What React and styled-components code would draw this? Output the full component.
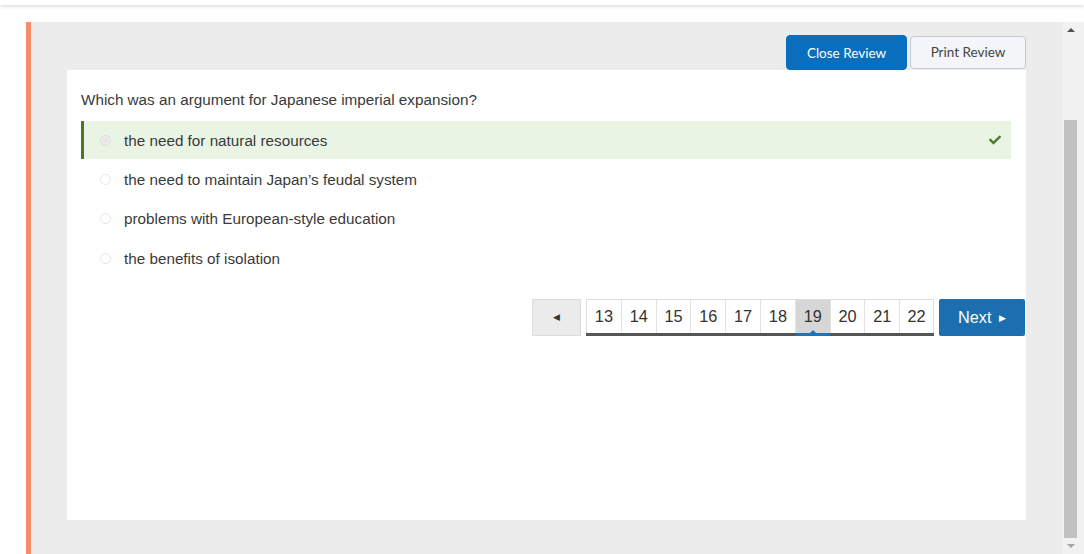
import React from "react";
import styled, { createGlobalStyle } from "styled-components";
import { FaCheck } from "react-icons/fa";

const GlobalStyle = createGlobalStyle`
  *, *::before, *::after {
    box-sizing: border-box;
  }
  html, body {
    margin: 0;
    padding: 0;
    background: #ffffff;
    font-family: "Liberation Sans", Arial, sans-serif;
    overflow: hidden;
  }
`;

const options = [
  { text: "the need for natural resources", correct: true },
  { text: "the need to maintain Japan\u2019s feudal system" },
  { text: "problems with European-style education" },
  { text: "the benefits of isolation" },
];

const pages = [13, 14, 15, 16, 17, 18, 19, 20, 21, 22];

const App = () => {
  return (
    <>
      <GlobalStyle />
      <TopBar />
      <Frame>
        <Panel>
          <Toolbar>
            <PrimaryButton>Close Review</PrimaryButton>
            <SecondaryButton>Print Review</SecondaryButton>
          </Toolbar>
          <Card>
            <Question>Which was an argument for Japanese imperial expansion?</Question>
            <OptionList>
              {options.map((opt) => (
                <Option key={opt.text} selected={opt.correct}>
                  <Radio selected={opt.correct} />
                  <OptionText>{opt.text}</OptionText>
                  {opt.correct && (
                    <Check>
                      <FaCheck size={12} />
                    </Check>
                  )}
                </Option>
              ))}
            </OptionList>
            <Pager>
              <PrevButton>&#9664;</PrevButton>
              <PageGroup>
                {pages.map((p) => (
                  <PageButton key={p} active={p === 19}>
                    {p}
                  </PageButton>
                ))}
              </PageGroup>
              <NextButton>
                Next <small>&#9654;</small>
              </NextButton>
            </Pager>
          </Card>
        </Panel>
        <ScrollBar>
          <ArrowUp />
          <Thumb />
          <ArrowDown />
        </ScrollBar>
      </Frame>
    </>
  );
};

const TopBar = styled.div`
  height: 5px;
  background: #ffffff;
  box-shadow: 0 1px 4px rgba(0, 0, 0, 0.18);
  position: relative;
  z-index: 1;
`;

const Frame = styled.div`
  display: flex;
  height: 532px;
  margin-top: 17px;
  padding-left: 26px;
`;

const Panel = styled.div`
  flex: 1;
  border-left: 5px solid #f78c6c;
  background: #ececec;
  padding: 13px 37px 34px 36px;
  display: flex;
  flex-direction: column;
`;

const Toolbar = styled.div`
  display: flex;
  justify-content: flex-end;
  align-items: center;
  gap: 3px;
  height: 35px;
`;

const PrimaryButton = styled.button`
  font-family: Lato, "Liberation Sans", sans-serif;
  font-size: 13.5px;
  color: #ffffff;
  background: #0a6ebf;
  border: 1px solid #0a6ebf;
  border-radius: 4px;
  width: 121px;
  height: 35px;
  padding: 0;
  cursor: pointer;
`;

const SecondaryButton = styled.button`
  font-family: Lato, "Liberation Sans", sans-serif;
  font-size: 13.5px;
  color: #444;
  background: #f3f5f8;
  border: 1px solid #c6cad0;
  border-radius: 4px;
  width: 116px;
  height: 33px;
  padding: 0;
  margin-top: -1px;
  cursor: pointer;
`;

const Card = styled.div`
  flex: 1;
  background: #ffffff;
  padding: 20px 15px 0 14px;
`;

const Question = styled.div`
  font-size: 15.25px;
  line-height: 20px;
  color: #3a3a3a;
`;

const OptionList = styled.div`
  margin-top: 11px;
  display: flex;
  flex-direction: column;
`;

const Option = styled.div`
  display: flex;
  align-items: center;
  height: ${(p) => (p.selected ? "38px" : "39.3px")};
  margin-bottom: ${(p) => (p.selected ? "1px" : "0")};
  padding-left: 16px;
  padding-right: 10px;
  border-left: 3px solid ${(p) => (p.selected ? "#4b7b1f" : "transparent")};
  background: ${(p) => (p.selected ? "#eaf4e4" : "transparent")};
`;

const Radio = styled.span`
  width: 11px;
  height: 11px;
  border-radius: 50%;
  border: 1px solid ${(p) => (p.selected ? "#dcdcdc" : "#e6e6e6")};
  background: ${(p) => (p.selected ? "#e4e4e4" : "#ffffff")};
  box-shadow: ${(p) => (p.selected ? "inset 0 0 0 2px #eeeeee" : "none")};
  margin-right: 13px;
  flex-shrink: 0;
`;

const OptionText = styled.span`
  flex: 1;
  font-size: 15.25px;
  color: #3a3a3a;
`;

const Check = styled.span`
  color: #4e7d2a;
  display: flex;
  align-items: center;
`;

const Pager = styled.div`
  display: flex;
  justify-content: flex-end;
  align-items: flex-start;
  margin: 21px -14px 0 0;
  gap: 5px;
`;

const PrevButton = styled.button`
  width: 49px;
  height: 37px;
  background: #ebebeb;
  border: 1px solid #dcdcdc;
  color: #333;
  font-size: 9px;
  padding: 0;
`;

const PageGroup = styled.div`
  display: flex;
  border-top: 1px solid #dedede;
  border-bottom: 3px solid #555555;
`;

const PageButton = styled.button`
  position: relative;
  width: 34.8px;
  height: 33px;
  padding: 1px 0 0;
  font-family: "Liberation Sans", Arial, sans-serif;
  font-size: 16.3px;
  color: #333;
  background: ${(p) => (p.active ? "#d6d6d6" : "#ffffff")};
  border: none;
  border-left: 1px solid #e2e2e2;
  &:first-child {
    border-left: 1px solid #dedede;
  }
  &:last-child {
    border-right: 1px solid #dedede;
  }
  ${(p) =>
    p.active &&
    `
    &::after {
      content: "";
      position: absolute;
      left: 0;
      right: 0;
      bottom: -3px;
      height: 3px;
      background: #1e73b6;
    }
    &::before {
      content: "";
      position: absolute;
      left: 50%;
      bottom: 0;
      margin-left: -3px;
      border-left: 3px solid transparent;
      border-right: 3px solid transparent;
      border-bottom: 3px solid #1e73b6;
    }
  `}
`;

const NextButton = styled.button`
  width: 86px;
  height: 37px;
  background: #1b6fae;
  border: none;
  border-radius: 2px;
  color: #ffffff;
  font-family: "Liberation Sans", Arial, sans-serif;
  font-size: 16.3px;
  padding: 0;
  small {
    font-size: 9px;
    margin-left: 3px;
    vertical-align: 2px;
  }
`;

const ScrollBar = styled.div`
  width: 21px;
  background: #f1f1f1;
  display: flex;
  flex-direction: column;
  align-items: flex-start;
  padding-left: 1px;
`;

const ArrowUp = styled.div`
  margin: 6px 0 0 3px;
  border-left: 4px solid transparent;
  border-right: 4px solid transparent;
  border-bottom: 4px solid #505050;
  width: 0;
  height: 0;
`;

const Thumb = styled.div`
  margin-top: 88px;
  width: 13px;
  height: 418px;
  background: #c1c1c1;
`;

const ArrowDown = styled.div`
  margin: 6px 0 0 3px;
  border-left: 4px solid transparent;
  border-right: 4px solid transparent;
  border-top: 4px solid #a3a3a3;
  width: 0;
  height: 0;
`;

export default App;
